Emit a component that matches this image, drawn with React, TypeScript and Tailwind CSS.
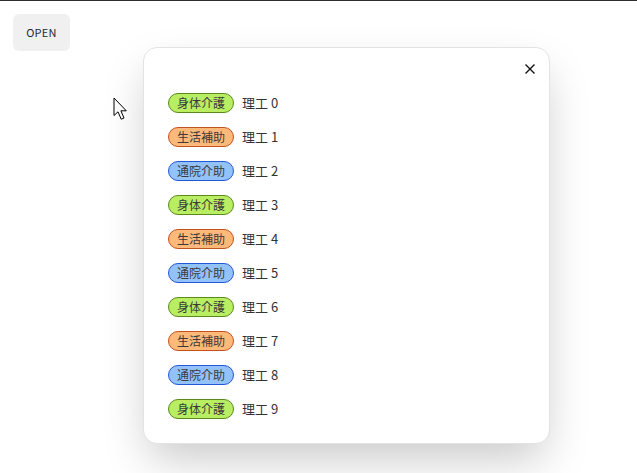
const KINDS = [
  { label: "身体介護", cls: "bg-[#b9ee63] border-[#5b8a1c]" },
  { label: "生活補助", cls: "bg-[#fdb97a] border-[#c4521c]" },
  { label: "通院介助", cls: "bg-[#93c2fb] border-[#2357d6]" },
];

const rows = Array.from({ length: 10 }, (_, i) => ({ kind: KINDS[i % 3], name: `理工 ${i}` }));

function Cursor() {
  return (
    <svg className="absolute left-[113px] top-[96px]" width="18" height="26" viewBox="0 0 18 26">
      <path
        d="M1 1 L1 18.5 L5 14.8 L8.2 22.2 L11 21 L7.9 13.8 L13.3 13.8 Z"
        fill="#fff"
        stroke="#000"
        strokeWidth="1"
        strokeLinejoin="miter"
      />
    </svg>
  );
}

export default function App() {
  return (
    <div
      className="relative w-[637px] h-[473px] bg-white border-t border-[#2d2d2d] overflow-hidden"
      style={{ fontFamily: '"Noto Sans CJK JP", "Noto Sans", sans-serif' }}
    >
      <button className="ml-[13px] mt-[13px] w-[57px] h-[37px] rounded-md bg-[#f0f0f0] text-[11px] text-[#1f2937] tracking-wide">
        OPEN
      </button>

      <Cursor />

      <div className="absolute left-[143px] top-[46px] w-[407px] h-[397px] rounded-[14px] bg-white border border-[#e3e3e3] shadow-[0_20px_45px_-6px_rgba(0,0,0,0.22)] px-[24px] pt-[12px]">
        <div className="flex justify-end -mr-[10px]">
          <svg width="10" height="10" viewBox="0 0 10 10" className="mt-[4px]">
            <path d="M0.5 0.5 L9.5 9.5 M9.5 0.5 L0.5 9.5" stroke="#111" strokeWidth="1.4" />
          </svg>
        </div>
        <ul className="mt-[19px] flex flex-col gap-[14px]">
          {rows.map((r) => (
            <li key={r.name} className="flex items-center gap-[8px] h-[20px]">
              <span
                className={`h-[20px] w-[66px] rounded-full border flex items-center justify-center text-[12px] text-[#3a3a3a] leading-none ${r.kind.cls}`}
              >
                {r.kind.label}
              </span>
              <span className="text-[13px] text-[#333]">{r.name}</span>
            </li>
          ))}
        </ul>
      </div>
    </div>
  );
}
